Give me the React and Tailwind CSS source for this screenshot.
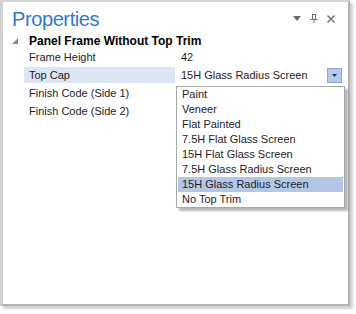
import React from 'react';

const font = { fontFamily: '"Liberation Sans", Arial, sans-serif' };

const rows = [
  { label: 'Frame Height', value: '42' },
  { label: 'Top Cap', value: '15H Glass Radius Screen', selected: true },
  { label: 'Finish Code (Side 1)', value: '' },
  { label: 'Finish Code (Side 2)', value: '' },
];

const options = [
  'Paint',
  'Veneer',
  'Flat Painted',
  '7.5H Flat Glass Screen',
  '15H Flat Glass Screen',
  '7.5H Glass Radius Screen',
  '15H Glass Radius Screen',
  'No Top Trim',
];

function PropertyRow({ label, value, selected }) {
  return (
    <div className="flex h-[18px] items-center">
      <div
        className={`ml-[21px] flex h-[16px] w-[151px] items-center pl-[5px] ${selected ? 'bg-[#dce5f4]' : ''}`}
      >
        {label}
      </div>
      <div className="ml-[1px] flex h-[16px] flex-1 items-center pl-[5px] pr-[6px]">
        <span className="flex-1">{value}</span>
        {selected && (
          <span className="flex h-[15px] w-[15px] items-center justify-center border border-[#8ea6cf] bg-[#b7c9e8]">
            <svg width="5" height="3" viewBox="0 0 5 3">
              <path d="M0 0h5L2.5 3z" fill="#2c3a52" />
            </svg>
          </span>
        )}
      </div>
    </div>
  );
}

export default function App() {
  return (
    <div className="relative h-[314px] w-[356px] bg-white text-[11px] text-[#1e1e1e]" style={font}>
      <div className="h-[306px] w-[350px] border-b-[2px] border-l-[3px] border-r-[2px] border-t-[2px] border-b-[#b3b3b3] border-l-[#d2d2d2] border-r-[#b3b3b3] border-t-[#d6d6d6] bg-white shadow-[3px_3px_2px_rgba(0,0,0,0.18)]">
        <div className="flex h-[32px] items-center justify-between pl-[9px] pr-[13px] pt-[1px]">
          <div className="text-[20px] leading-none tracking-[-0.4px] text-[#2f78d6]">Properties</div>
          <div className="flex items-center gap-[9px] text-[#707070]">
            <svg width="8" height="5" viewBox="0 0 8 5">
              <path d="M0 0h8L4 5z" fill="#6b6b6b" />
            </svg>
            <svg width="8" height="9" viewBox="0 0 8 9">
              <path d="M2 0.5h4M2.5 0.5v4.5M5.5 0.5v4.5M0.5 5.5h7M4 5.5v3.5" stroke="#6b6b6b" strokeWidth="1" fill="none" />
            </svg>
            <svg width="8" height="8" viewBox="0 0 8 8">
              <path d="M0.5 0.5l7 7M7.5 0.5l-7 7" stroke="#6b6b6b" strokeWidth="1.4" fill="none" />
            </svg>
          </div>
        </div>
        <div className="flex h-[14px] items-center">
          <svg className="ml-[9px]" width="6" height="6" viewBox="0 0 6 6">
            <path d="M6 0v6H0z" fill="#8a8a8a" />
          </svg>
          <span className="ml-[11px] text-[12px] font-bold text-black">Panel Frame Without Top Trim</span>
        </div>
        {rows.map(r => (
          <PropertyRow key={r.label} {...r} />
        ))}
      </div>

      <div className="absolute left-[176px] top-[86px] w-[169px] border border-[#a8a8a8] bg-white shadow-[3px_3px_2px_rgba(0,0,0,0.28)]">
        {options.map(o => (
          <div
            key={o}
            className={`mx-[1px] flex h-[15px] items-center pl-[4px] ${o === '15H Glass Radius Screen' ? 'bg-[#b4c6e6]' : ''}`}
          >
            {o}
          </div>
        ))}
      </div>
    </div>
  );
}
